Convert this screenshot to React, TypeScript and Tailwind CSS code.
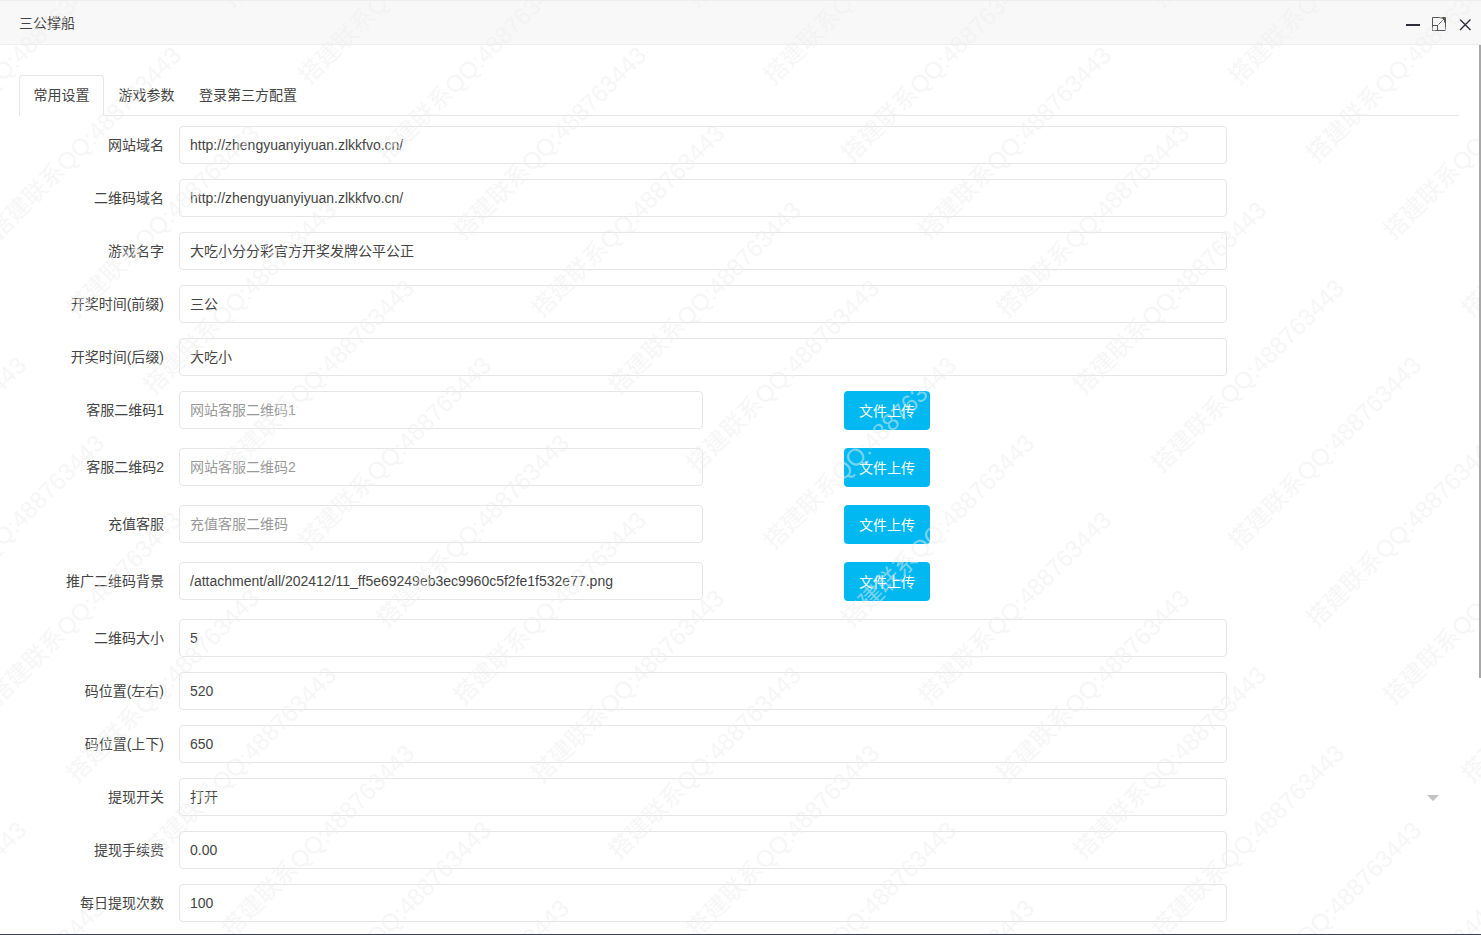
import React from "react";

const FONT = "font-['Liberation_Sans','Noto_Sans_CJK_SC',sans-serif]";

// watermark lattice, read off the screenshot
const marks: { x: number; y: number }[] = [];
for (let i = -6; i < 8; i++) {
  for (let j = -2; j < 14; j++) {
    marks.push({ x: 7.5 + i * 465 + j * 77.5, y: 65.5 + j * 77.5 });
  }
}

function Watermark() {
  return (
    <div className="pointer-events-none absolute inset-0 overflow-hidden">
      {marks.map((m, i) => (
        <span
          key={i}
          className="absolute -translate-x-1/2 -translate-y-1/2 -rotate-45 whitespace-nowrap text-[24px] text-[#eeeeee]/50"
          style={{ left: m.x, top: m.y }}
        >
          搭建联系QQ:488763443
        </span>
      ))}
    </div>
  );
}

function Field({ label, value, placeholder }: { label: string; value?: string; placeholder?: string }) {
  return (
    <div className="mb-[15px] flex h-[38px] shrink-0 items-center">
      <span className="w-[164px] shrink-0 text-right text-sm text-[#444]">{label}</span>
      <div className="ml-[15px] flex h-[38px] w-[1048px] items-center rounded-sm border border-[#e6e6e6] bg-white pl-[10px] text-sm text-[#444]">
        {value ?? <span className="text-[#999]">{placeholder}</span>}
      </div>
    </div>
  );
}

function UploadField({ label, value, placeholder }: { label: string; value?: string; placeholder?: string }) {
  return (
    <div className="mb-[18px] flex h-[39px] shrink-0 items-start">
      <span className="w-[164px] shrink-0 text-right text-sm leading-[38px] text-[#444]">{label}</span>
      <div className="ml-[15px] flex h-[38px] w-[524px] items-center rounded-sm border border-[#e6e6e6] bg-white pl-[10px] text-sm text-[#444]">
        {value ?? <span className="text-[#999]">{placeholder}</span>}
      </div>
      <button className="ml-[141px] h-[39px] w-[86px] rounded-sm bg-[#01b8f1] text-sm text-white">文件上传</button>
    </div>
  );
}

export default function App() {
  return (
    <div className={`relative flex h-[935px] w-[1481px] flex-col overflow-hidden bg-white ${FONT}`}>
      <div className="flex h-[45px] shrink-0 items-start justify-between border-t border-b border-[#eee] bg-[#f8f8f8] pl-[19px]">
        <span className="text-sm leading-[44px] text-[#444]">三公撑船</span>
        <svg width="81" height="30" viewBox="1400 10 81 30" fill="none" className="mt-[9px]">
          <path d="M1406 25h14" stroke="#2e2d3c" strokeWidth="2" />
          <path d="M1432.5 25v-7.5h13v13h-7.5" stroke="#555" />
          <rect x="1432.5" y="25.5" width="5" height="5" stroke="#555" />
          <path d="M1438.5 24.5l6-6M1440.5 18.5h4v4" stroke="#555" />
          <path d="M1460 19.5l10.5 10.5M1470.5 19.5l-10.5 10.5" stroke="#2e2d3c" strokeWidth="1.4" />
        </svg>
      </div>
      <div className="flex min-h-0 flex-1 flex-col pl-[19px] pt-[30px]">
        <div className="mr-[22px] flex h-[41px] shrink-0 border-b border-[#e6e6e6] text-sm text-[#444]">
          <div className="flex h-[41px] w-[85px] items-center justify-center rounded-t-sm border border-b-0 border-[#e6e6e6] bg-white pb-[2px]">常用设置</div>
          <div className="flex h-[40px] w-[85px] items-center justify-center">游戏参数</div>
          <div className="flex h-[40px] w-[118px] items-center justify-center">登录第三方配置</div>
        </div>
        <div className="-ml-[19px] flex flex-col pt-[10px]">
          <Field label="网站域名" value="http://zhengyuanyiyuan.zlkkfvo.cn/" />
          <Field label="二维码域名" value="http://zhengyuanyiyuan.zlkkfvo.cn/" />
          <Field label="游戏名字" value="大吃小分分彩官方开奖发牌公平公正" />
          <Field label="开奖时间(前缀)" value="三公" />
          <Field label="开奖时间(后缀)" value="大吃小" />
          <UploadField label="客服二维码1" placeholder="网站客服二维码1" />
          <UploadField label="客服二维码2" placeholder="网站客服二维码2" />
          <UploadField label="充值客服" placeholder="充值客服二维码" />
          <UploadField label="推广二维码背景" value="/attachment/all/202412/11_ff5e69249eb3ec9960c5f2fe1f532e77.png" />
          <Field label="二维码大小" value="5" />
          <Field label="码位置(左右)" value="520" />
          <Field label="码位置(上下)" value="650" />
          <div className="relative">
            <Field label="提现开关" value="打开" />
            <span className="absolute left-[1427px] top-[17px] h-0 w-0 border-x-[6px] border-t-[6px] border-x-transparent border-t-[#c2c2c2]" />
          </div>
          <Field label="提现手续费" value="0.00" />
          <Field label="每日提现次数" value="100" />
        </div>
      </div>
      <Watermark />
      {/* scrollbar + bottom edge */}
      <div className="absolute right-0 top-[45px] h-[633px] w-[2px] bg-[#a8a8a8]" />
      <div className="absolute bottom-0 left-0 h-px w-full bg-[#3a3f4b]" />
    </div>
  );
}
